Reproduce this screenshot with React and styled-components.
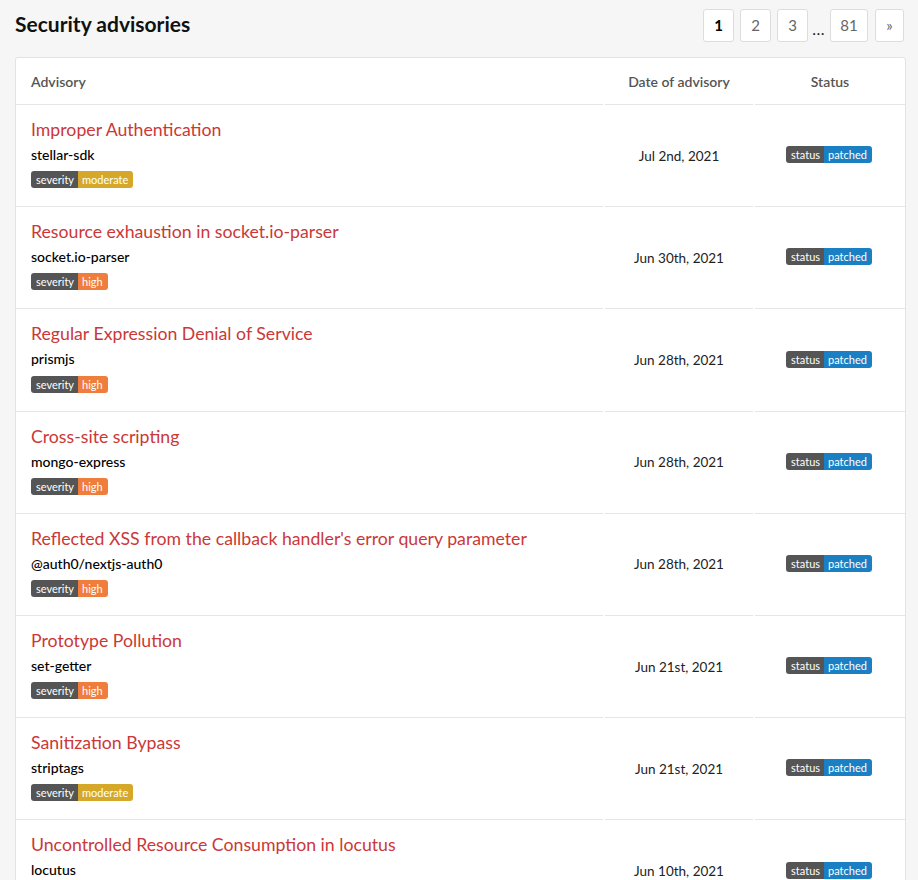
import React from "react";
import styled, { createGlobalStyle } from "styled-components";

const advisories = [
  { title: "Improper Authentication", pkg: "stellar-sdk", severity: "moderate", date: "Jul 2nd, 2021" },
  { title: "Resource exhaustion in socket.io-parser", pkg: "socket.io-parser", severity: "high", date: "Jun 30th, 2021" },
  { title: "Regular Expression Denial of Service", pkg: "prismjs", severity: "high", date: "Jun 28th, 2021" },
  { title: "Cross-site scripting", pkg: "mongo-express", severity: "high", date: "Jun 28th, 2021" },
  { title: "Reflected XSS from the callback handler's error query parameter", pkg: "@auth0/nextjs-auth0", severity: "high", date: "Jun 28th, 2021" },
  { title: "Prototype Pollution", pkg: "set-getter", severity: "high", date: "Jun 21st, 2021" },
  { title: "Sanitization Bypass", pkg: "striptags", severity: "moderate", date: "Jun 21st, 2021" },
  { title: "Uncontrolled Resource Consumption in locutus", pkg: "locutus", severity: "high", date: "Jun 10th, 2021" },
];

const badgeColors = {
  moderate: "#d6a82a",
  high: "#ef7d3b",
  patched: "#1b7fc3",
};

const GlobalStyle = createGlobalStyle`
  html, body {
    margin: 0;
    background: #f6f6f6;
  }
  body {
    font-family: "Lato", "Liberation Sans", sans-serif;
    color: #000;
    overflow: hidden;
  }
`;

const App = () => {
  return (
    <Page>
      <GlobalStyle />
      <TopBar>
        <Heading>Security advisories</Heading>
        <Pager>
          <PageBtn active>1</PageBtn>
          <PageBtn>2</PageBtn>
          <PageBtn>3</PageBtn>
          <Dots>...</Dots>
          <PageBtn wide>81</PageBtn>
          <PageBtn narrow>»</PageBtn>
        </Pager>
      </TopBar>
      <Card>
        <HeadRow>
          <HeadCell>Advisory</HeadCell>
          <HeadCell center>Date of advisory</HeadCell>
          <HeadCell center>Status</HeadCell>
        </HeadRow>
        {advisories.map((a) => (
          <Row key={a.title}>
            <MainCell>
              <Title href="#">{a.title}</Title>
              <Pkg>{a.pkg}</Pkg>
              <Badge>
                <BadgeLabel>severity</BadgeLabel>
                <BadgeValue color={badgeColors[a.severity]}>{a.severity}</BadgeValue>
              </Badge>
            </MainCell>
            <DateCell>{a.date}</DateCell>
            <StatusCell>
              <StatusBadge>
                <BadgeLabel>status</BadgeLabel>
                <BadgeValue color={badgeColors.patched}>patched</BadgeValue>
              </StatusBadge>
            </StatusCell>
          </Row>
        ))}
      </Card>
    </Page>
  );
};

export default App;

const Page = styled.div`
  padding: 0 12px 0 15px;
`;

const TopBar = styled.div`
  display: flex;
  align-items: center;
  justify-content: space-between;
  height: 57px;
  padding-right: 2px;
`;

const Heading = styled.h1`
  margin: 0 0 11px;
  font-size: 21px;
  font-weight: 700;
  color: #111;
`;

const Pager = styled.div`
  display: flex;
  align-items: center;
  gap: 6px;
  margin-top: -7px;
`;

const PageBtn = styled.a`
  display: flex;
  align-items: center;
  justify-content: center;
  box-sizing: border-box;
  height: 33px;
  width: ${(p) => (p.wide ? "38px" : p.narrow ? "29px" : "31px")};
  margin-left: ${(p) => (p.narrow ? "1px" : "0")};
  background: #fff;
  border: 1px solid #ddd;
  border-radius: 3px;
  font-size: 15px;
  color: ${(p) => (p.active ? "#000" : "#666")};
  font-weight: ${(p) => (p.active ? 700 : 400)};
`;

const Dots = styled.span`
  font-size: 16px;
  letter-spacing: 0.5px;
  color: #222;
  margin: 6px -1px 0 -2px;
`;

const Card = styled.div`
  background: #fff;
  border: 1px solid #e3e3e3;
  border-radius: 3px;
  overflow: hidden;
`;

const HeadRow = styled.div`
  display: grid;
  grid-template-columns: 1fr 148px 150px;
  column-gap: 2px;
`;

const HeadCell = styled.div`
  height: 46px;
  display: flex;
  align-items: center;
  justify-content: ${(p) => (p.center ? "center" : "flex-start")};
  padding-left: ${(p) => (p.center ? "0" : "15px")};
  border-bottom: 1px solid #e6e6e6;
  font-size: 14px;
  font-weight: 600;
  color: #555;
`;

const Row = styled.div`
  display: grid;
  grid-template-columns: 1fr 148px 150px;
  column-gap: 2px;
`;

const MainCell = styled.div`
  display: flex;
  flex-direction: column;
  align-items: flex-start;
  padding: 13px 15px 18px;
  border-bottom: 1px solid #e6e6e6;
`;

const Title = styled.a`
  font-size: 17.7px;
  line-height: 24px;
  color: #cb3837;
  text-decoration: none;
`;

const Pkg = styled.div`
  margin-top: 3px;
  font-size: 14px;
  line-height: 20.2px;
  font-weight: 500;
  color: #000;
`;

const DateCell = styled.div`
  display: flex;
  align-items: center;
  justify-content: center;
  border-bottom: 1px solid #e6e6e6;
  font-size: 13.5px;
  color: #222;
`;

const StatusCell = styled.div`
  display: flex;
  align-items: center;
  justify-content: center;
  padding-bottom: 2px;
  border-bottom: 1px solid #e6e6e6;
`;

const Badge = styled.span`
  display: inline-flex;
  margin-top: 6px;
  height: 17px;
  border-radius: 3px;
  overflow: hidden;
  font-size: 11px;
  line-height: 17px;
  color: #fff;
`;

const StatusBadge = styled(Badge)`
  margin-top: 0;
  margin-left: -2px;
`;

const BadgeLabel = styled.span`
  background: #555;
  padding: 0 4px 0 5px;
`;

const BadgeValue = styled.span`
  background: ${(p) => p.color};
  padding: 0 5px 0 4px;
`;
